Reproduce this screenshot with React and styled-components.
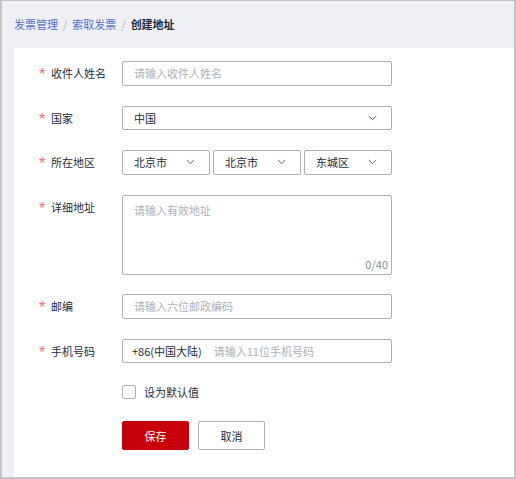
import React from 'react';
import styled, { createGlobalStyle } from 'styled-components';

const GlobalStyle = createGlobalStyle`
  html, body {
    margin: 0;
    padding: 0;
    background: #fff;
  }
  * {
    box-sizing: border-box;
  }
`;

const Frame = styled.div`
  width: 516px;
  height: 479px;
  border: 2px solid #c4c4c4;
  border-top-width: 1px;
  background: #eef0f5;
  display: flex;
  flex-direction: column;
  overflow: hidden;
  font-family: "Noto Sans CJK SC", "Noto Sans", sans-serif;
  font-size: 11px;
  color: #252b3a;
`;

const Breadcrumb = styled.div`
  display: flex;
  align-items: center;
  height: 16px;
  margin: 15px 0 16px 12px;
  line-height: 16px;
`;

const Crumb = styled.span`
  color: ${(p) => (p.$current ? '#252b3a' : '#526ecc')};
  font-weight: ${(p) => (p.$current ? 600 : 400)};
`;

const Sep = styled.span`
  color: #adb0b8;
  margin: 0 5px;
`;

const Card = styled.div`
  flex: 1;
  margin-left: 12px;
  background: #fff;
  padding: 13px 0 0 25px;
`;

const Row = styled.div`
  display: flex;
  align-items: flex-start;
  margin-bottom: ${(p) => p.$gap ?? 20}px;
`;

const Label = styled.div`
  width: 83px;
  flex-shrink: 0;
  height: 24.5px;
  display: flex;
  align-items: center;
`;

const Star = styled.span`
  color: #f66f6a;
  font-family: "Liberation Sans", sans-serif;
  font-size: 16px;
  line-height: 16px;
  height: 16px;
  width: 12px;
  margin-top: 4px;
`;

const Field = styled.div`
  width: 270px;
  height: ${(p) => p.$h ?? 24.5}px;
  border: 1px solid #adb0b8;
  border-radius: 2px;
  display: flex;
  align-items: center;
  padding: 0 11px;
  position: relative;
  background: #fff;
`;

const TextInput = styled.input`
  border: none;
  outline: none;
  flex: 1;
  min-width: 0;
  padding: 0;
  font: inherit;
  color: #252b3a;
  background: transparent;
  &::placeholder {
    color: #adb0b8;
  }
`;

const Value = styled.span`
  flex: 1;
  color: #252b3a;
`;

const Chevron = () => (
  <svg width="9" height="6" viewBox="0 0 9 6">
    <polyline points="0.8,1 4.5,4.6 8.2,1" fill="none" stroke="#5e6168" strokeWidth="1" />
  </svg>
);

const SelectGroup = styled.div`
  display: flex;
  gap: 3px;
  width: 270px;
`;

const Select = styled(Field)`
  width: 88px;
  padding: 0 14px 0 11px;
`;

const TextArea = styled.textarea`
  width: 100%;
  height: 100%;
  border: none;
  outline: none;
  resize: none;
  padding: 0;
  font: inherit;
  color: #252b3a;
  &::placeholder {
    color: #adb0b8;
  }
`;

const AreaField = styled(Field)`
  align-items: flex-start;
  padding: 6px 11px;
`;

const Counter = styled.span`
  position: absolute;
  right: 3px;
  bottom: 2px;
  color: #8a8e99;
  font-size: 11px;
`;

const Prefix = styled.span`
  color: #252b3a;
  margin-right: 12px;
  margin-left: -2px;
`;

const Indent = styled.div`
  margin-left: 83px;
  display: flex;
  align-items: center;
`;

const Box = styled.span`
  width: 14px;
  height: 14px;
  border: 1px solid #adb0b8;
  border-radius: 2px;
  margin-right: 8px;
`;

const Button = styled.button`
  width: 67px;
  height: 29px;
  border-radius: 2px;
  font: inherit;
  font-size: 11px;
  margin-right: 9px;
  padding: 0;
  border: 1px solid ${(p) => (p.$primary ? '#c7000b' : '#adb0b8')};
  background: ${(p) => (p.$primary ? '#c7000b' : '#fff')};
  color: ${(p) => (p.$primary ? '#fff' : '#252b3a')};
`;

const FormLabel = ({ children }) => (
  <Label>
    <Star>*</Star>
    {children}
  </Label>
);

export default function App() {
  return (
    <>
      <GlobalStyle />
      <Frame>
        <Breadcrumb>
          <Crumb>发票管理</Crumb>
          <Sep>/</Sep>
          <Crumb>索取发票</Crumb>
          <Sep>/</Sep>
          <Crumb $current>创建地址</Crumb>
        </Breadcrumb>
        <Card>
          <Row>
            <FormLabel>收件人姓名</FormLabel>
            <Field>
              <TextInput placeholder="请输入收件人姓名" />
            </Field>
          </Row>
          <Row>
            <FormLabel>国家</FormLabel>
            <Field style={{ paddingRight: 14 }}>
              <Value>中国</Value>
              <Chevron />
            </Field>
          </Row>
          <Row>
            <FormLabel>所在地区</FormLabel>
            <SelectGroup>
              {['北京市', '北京市', '东城区'].map((v, i) => (
                <Select key={i}>
                  <Value>{v}</Value>
                  <Chevron />
                </Select>
              ))}
            </SelectGroup>
          </Row>
          <Row $gap={19.5}>
            <FormLabel>详细地址</FormLabel>
            <AreaField $h={80}>
              <TextArea placeholder="请输入有效地址" />
              <Counter>0/40</Counter>
            </AreaField>
          </Row>
          <Row>
            <FormLabel>邮编</FormLabel>
            <Field>
              <TextInput placeholder="请输入六位邮政编码" />
            </Field>
          </Row>
          <Row $gap={21}>
            <FormLabel>手机号码</FormLabel>
            <Field>
              <Prefix>+86(中国大陆)</Prefix>
              <TextInput placeholder="请输入11位手机号码" />
            </Field>
          </Row>
          <Row $gap={21}>
            <Indent>
              <Box />
              <span>设为默认值</span>
            </Indent>
          </Row>
          <Row>
            <Indent>
              <Button $primary>保存</Button>
              <Button>取消</Button>
            </Indent>
          </Row>
        </Card>
      </Frame>
    </>
  );
}
